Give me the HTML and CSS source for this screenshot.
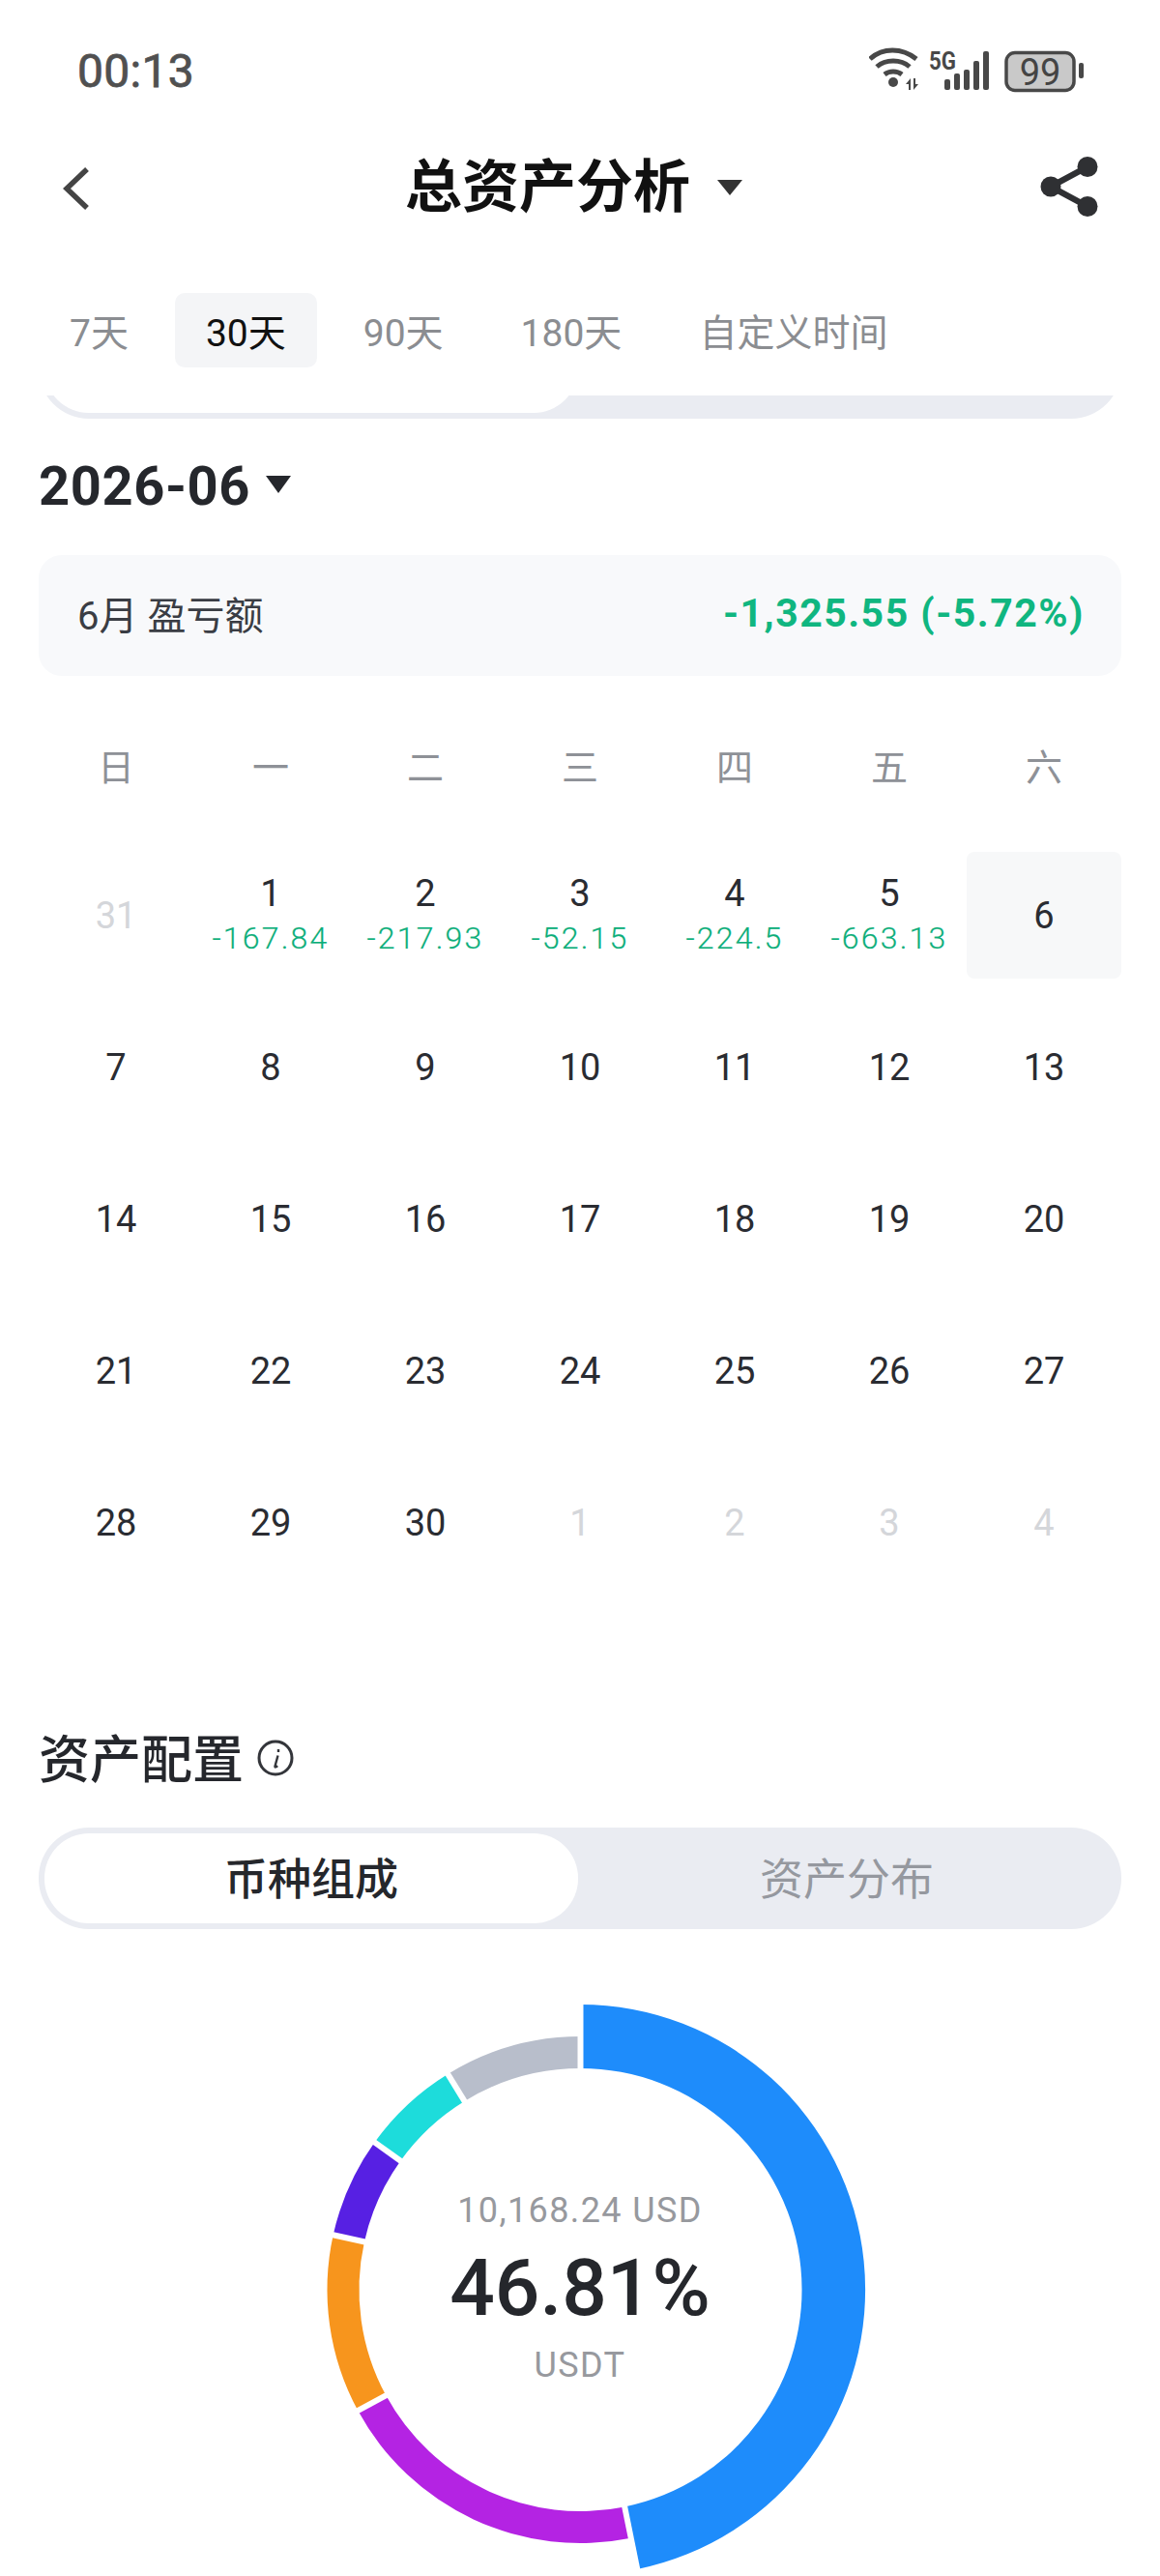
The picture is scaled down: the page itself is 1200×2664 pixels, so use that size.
FILE: index.html
```html
<!DOCTYPE html>
<html lang="zh-CN">
<head>
<meta charset="utf-8">
<title>总资产分析</title>
<link rel="stylesheet" href="styles.css">
</head>
<body>
<div class="page">
  <header class="status">
    <span class="time">00:13</span>
    <svg class="status-icons" viewBox="0 0 245 50" width="245" height="50">
      <g fill="none" stroke="#484848" stroke-width="5">
        <path d="M1 14C14 2 34 2 49 14"/>
        <path d="M8 22C17 14 33 14 42 22"/>
        <path d="M16 30C21 26 29 26 34 30"/>
      </g>
      <circle cx="25" cy="38" r="5" fill="#484848"/>
      <path d="M38 40l5-6v12h-2v-6zM46 34h2v6h3l-5 6z" fill="#484848"/>
      <text class="five-g" x="62" y="25" textLength="28" lengthAdjust="spacingAndGlyphs">5G</text>
      <g fill="#484848">
        <rect x="78" y="35" width="6" height="11" rx="2"/>
        <rect x="88" y="29" width="6" height="17" rx="2"/>
        <rect x="98" y="25" width="6" height="21" rx="2"/>
        <rect x="108" y="16" width="6" height="30" rx="2"/>
        <rect x="118" y="6" width="6" height="40" rx="2"/>
        <rect x="217" y="18" width="5" height="16" rx="2"/>
      </g>
      <rect x="142" y="7.5" width="70" height="39" rx="9" fill="#c9c9c9" stroke="#484848" stroke-width="3.5"/>
      <text class="battery-text" x="177" y="41">99</text>
    </svg>
  </header>

  <nav class="nav">
    <svg class="back" viewBox="0 0 34 46" width="34" height="46"><path d="M30 3L9 23l21 20" fill="none" stroke="#444" stroke-width="5.5"/></svg>
    <div class="nav-title">
      <h1>总资产分析</h1>
      <span class="caret caret-nav"></span>
    </div>
    <svg class="share" viewBox="0 0 62 62" width="62" height="62">
      <path d="M50 10.5L12 31l38 20.5" fill="none" stroke="#2f3033" stroke-width="6.5"/>
      <circle cx="50" cy="10.5" r="10.5" fill="#2f3033"/>
      <circle cx="12" cy="31" r="10.5" fill="#2f3033"/>
      <circle cx="50" cy="51.5" r="10.5" fill="#2f3033"/>
    </svg>
  </nav>

  <div class="tabs">
    <span class="tab">7天</span>
    <span class="tab tab-on">30天</span>
    <span class="tab">90天</span>
    <span class="tab">180天</span>
    <span class="tab">自定义时间</span>
  </div>

  <div class="clipped">
    <div class="segment">
      <div class="seg-item seg-on">&nbsp;</div>
      <div class="seg-item">&nbsp;</div>
    </div>
  </div>

  <div class="month">
    <span class="month-text">2026-06</span>
    <span class="caret caret-month"></span>
  </div>

  <div class="summary">
    <span class="summary-label">6月 盈亏额</span>
    <span class="summary-value">-1,325.55 (-5.72%)</span>
  </div>

  <div class="weekdays">
    <span>日</span><span>一</span><span>二</span><span>三</span><span>四</span><span>五</span><span>六</span>
  </div>

  <div class="days">
    <div class="day muted">31</div>
    <div class="day">1<small>-167.84</small></div>
    <div class="day">2<small>-217.93</small></div>
    <div class="day">3<small>-52.15</small></div>
    <div class="day">4<small>-224.5</small></div>
    <div class="day">5<small>-663.13</small></div>
    <div class="day today">6</div>
    <div class="day">7</div><div class="day">8</div><div class="day">9</div><div class="day">10</div><div class="day">11</div><div class="day">12</div><div class="day">13</div>
    <div class="day">14</div><div class="day">15</div><div class="day">16</div><div class="day">17</div><div class="day">18</div><div class="day">19</div><div class="day">20</div>
    <div class="day">21</div><div class="day">22</div><div class="day">23</div><div class="day">24</div><div class="day">25</div><div class="day">26</div><div class="day">27</div>
    <div class="day">28</div><div class="day">29</div><div class="day">30</div>
    <div class="day muted">1</div><div class="day muted">2</div><div class="day muted">3</div><div class="day muted">4</div>
  </div>

  <div class="section-title">
    <h2>资产配置</h2>
    <svg class="info" viewBox="0 0 38 38" width="38" height="38">
      <circle cx="19" cy="19" r="17" fill="none" stroke="#33353a" stroke-width="3"/>
      <path d="M21.5 16.5l-3 11c-.3 1.2.8 1.4 2.6-.4M22 10v3" fill="none" stroke="#33353a" stroke-width="2.4"/>
    </svg>
  </div>

  <div class="segment">
    <div class="seg-item seg-on">币种组成</div>
    <div class="seg-item">资产分布</div>
  </div>

  <div class="donut">
    <svg viewBox="-300.5 -295 600 590" width="600" height="590">
      <path fill="#1e8cfb" d="M0 -295A295 295 0 0 1 58.8 289L45.7 224.4A229 229 0 0 0 0 -229Z"/>
      <path fill="#b423e3" d="M52.2 256.7A262 262 0 0 1 -230.2 125L-201.2 109.3A229 229 0 0 0 45.7 224.4Z"/>
      <path fill="#f7951d" d="M-230.2 125A262 262 0 0 1 -255.8 -56.7L-223.6 -49.6A229 229 0 0 0 -201.2 109.3Z"/>
      <path fill="#5720e3" d="M-255.8 -56.7A262 262 0 0 1 -213 -152.5L-186.2 -133.3A229 229 0 0 0 -223.6 -49.6Z"/>
      <path fill="#1ddcdb" d="M-213 -152.5A262 262 0 0 1 -137.3 -223.1L-120 -195A229 229 0 0 0 -186.2 -133.3Z"/>
      <path fill="#b8becb" d="M-137.3 -223.1A262 262 0 0 1 0 -262L0 -229A229 229 0 0 0 -120 -195Z"/>
      <g stroke="#fff" stroke-width="6">
        <path d="M0 -300V-225"/>
        <path d="M59.8 294L44.9 220.5"/>
        <path d="M-241.7 131.2L-197.7 107.4"/>
        <path d="M-268.5 -59.5L-219.7 -48.7"/>
        <path d="M-223.6 -160.1L-182.9 -131"/>
        <path d="M-144.1 -234.2L-117.9 -191.6"/>
      </g>
    </svg>
    <div class="donut-label">
      <span class="donut-amount">10,168.24 USD</span>
      <span class="donut-pct">46.81%</span>
      <span class="donut-coin">USDT</span>
    </div>
  </div>
</div>
</body>
</html>
```

FILE: styles.css
```css
* { box-sizing: border-box; }
html, body { margin: 0; padding: 0; background: #fff; overflow: hidden; }
body { font-family: Roboto, "Noto Sans CJK SC", sans-serif; color: #25272c; }
h1, h2 { margin: 0; }
.page { width: 1200px; height: 2664px; overflow: hidden; }

.status { height: 146px; padding: 0 56px 0 80px; display: flex; align-items: center; justify-content: space-between; }
.time { font-size: 48px; font-weight: 400; color: #505050; -webkit-text-stroke: .8px #505050; letter-spacing: .3px; }
.status-icons { margin-top: -2px; }
.five-g { font: 700 26px Roboto, sans-serif; fill: #484848; }
.battery-text { font: 400 38px Roboto, sans-serif; fill: #444; text-anchor: middle; }

.nav { height: 94px; padding: 2px 63px 0 60px; display: flex; align-items: center; justify-content: space-between; }
.nav-title { display: flex; align-items: center; gap: 28px; margin-left: 18px; }
.nav-title h1 { font-size: 59px; line-height: 76px; font-weight: 700; color: #111; }
.caret { display: block; width: 0; height: 0; border-style: solid; border-color: #333 transparent transparent; }
.caret-nav { border-width: 16px 13px 0; }
.back { margin-top: 2px; }
.share { margin-top: -2px; }

.tabs { margin-top: 63px; padding: 0 40px; display: flex; gap: 16px; height: 77px; }
.tab { padding: 0 32px 2px; display: flex; align-items: center; font-size: 39px; color: #8b8d91; border-radius: 10px; }
.tab-on { background: #f4f5f7; color: #111; }

.clipped { margin: 29px 40px 0; height: 24px; overflow: hidden; display: flex; align-items: flex-end; }
.clipped .segment { flex: 1; }

.segment { margin: 0 40px; height: 105px; padding: 6px; border-radius: 52px; background: #eaecf2; display: grid; grid-template-columns: 552px 1fr; }
.clipped .segment { margin: 0; }
.seg-item { display: flex; align-items: center; justify-content: center; border-radius: 46px; font-size: 45px; color: #95989f; padding-bottom: 5px; }
.seg-on { background: #fff; color: #25272c; font-weight: 500; }

.month { margin: 40px 40px 0; height: 60px; display: flex; align-items: center; gap: 16px; }
.month-text { font-size: 56px; font-weight: 700; color: #25272c; letter-spacing: .6px; }
.caret-month { border-width: 18px 13px 0; border-top-color: #25272c; margin-top: -4px; }

.summary { margin: 41px 40px 0; height: 125px; padding: 0 38px 6px 40px; border-radius: 24px; background: #f8f9fb; display: flex; align-items: center; justify-content: space-between; }
.summary-label { font-size: 40px; color: #3a3d44; }
.summary-value { font-size: 41px; font-weight: 700; color: #10b680; letter-spacing: 1.5px; }

.weekdays { margin: 62px 40px 0; height: 60px; padding-bottom: 2px; display: grid; grid-template-columns: repeat(7, 1fr); align-items: center; text-align: center; font-size: 38px; color: #8e9197; }

.days { margin: 60px 40px 0; display: grid; grid-template-columns: repeat(7, 1fr); grid-auto-rows: 131px; row-gap: 26px; }
.day { display: flex; flex-direction: column; align-items: center; justify-content: center; font-size: 38px; line-height: 46px; color: #2a2c32; border-radius: 8px; }
.day small { font-size: 32px; line-height: 46px; font-weight: 300; color: #0cae7a; letter-spacing: 2.2px; -webkit-text-stroke: .2px #0cae7a; }
.muted { color: #d4d6da; }
.today { background: #f7f8f9; }

.section-title { margin: 146px 40px 0; height: 60px; display: flex; align-items: center; gap: 14px; }
.section-title h2 { font-size: 53px; font-weight: 500; color: #25272c; }
.info { margin-top: 3px; }

.section-title + .segment { margin-top: 44px; }

.donut { position: relative; margin: 78px auto 0; width: 600px; height: 590px; }
.donut svg { display: block; }
.donut-label { position: absolute; left: 0; right: 0; top: 186px; display: flex; flex-direction: column; align-items: center; }
.donut-amount { font-size: 36px; line-height: 54px; color: #97999e; letter-spacing: 1.4px; }
.donut-pct { font-size: 82px; line-height: 106px; font-weight: 500; color: #25272c; }
.donut-coin { font-size: 36px; line-height: 54px; color: #97999e; letter-spacing: 1.4px; }
```
